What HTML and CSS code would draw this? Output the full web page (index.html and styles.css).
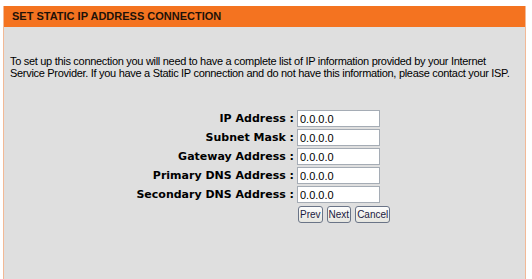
FILE: index.html
```html
<!DOCTYPE html>
<html lang="en">
<head>
    <meta charset="UTF-8">
    <title>Set Static IP Address Connection</title>
    <link rel="stylesheet" href="styles.css">
</head>
<body>
    <div class="box">
        <div class="box-heading">SET STATIC IP ADDRESS CONNECTION</div>
        <div class="box-body">
            <p class="intro">To set up this connection you will need to have a complete list of IP information provided by your Internet Service Provider. If you have a Static IP connection and do not have this information, please contact your ISP.</p>
            <table class="form-table">
                <tr>
                    <td class="label">IP Address :</td>
                    <td><input type="text" class="field" value="0.0.0.0"></td>
                </tr>
                <tr>
                    <td class="label">Subnet Mask :</td>
                    <td><input type="text" class="field" value="0.0.0.0"></td>
                </tr>
                <tr>
                    <td class="label">Gateway Address :</td>
                    <td><input type="text" class="field" value="0.0.0.0"></td>
                </tr>
                <tr>
                    <td class="label">Primary DNS Address :</td>
                    <td><input type="text" class="field" value="0.0.0.0"></td>
                </tr>
                <tr>
                    <td class="label">Secondary DNS Address :</td>
                    <td><input type="text" class="field" value="0.0.0.0"></td>
                </tr>
                <tr>
                    <td></td>
                    <td class="buttons">
                        <button class="btn">Prev</button><button class="btn">Next</button><button class="btn">Cancel</button>
                    </td>
                </tr>
            </table>
        </div>
    </div>
</body>
</html>
```

FILE: styles.css
```css
body {
    margin: 0;
    background-color: #fff;
    font-family: "Liberation Sans", Arial, sans-serif;
    font-size: 11px;
    color: #000;
}
.box {
    margin: 6px 6px 0 3px;
    border-left: 1px solid #f2b996;
    border-right: 1px solid #f2b996;
    background-color: #dfdfdf;
    height: 273px;
}
.box-heading {
    background-color: #f47320;
    color: #1e1208;
    font-weight: bold;
    font-size: 11px;
    height: 21px;
    line-height: 21px;
    padding-left: 8px;
}
.box-body {
    padding: 0 6px;
}
.intro {
    margin: 0;
    padding-top: 28px;
    line-height: 12px;
    letter-spacing: -0.3px;
}
.form-table {
    margin-top: 30px;
    border-collapse: collapse;
}
.form-table td {
    padding: 1px 0;
    height: 17px;
}
.label {
    width: 284px;
    text-align: right;
    font-family: "DejaVu Sans", Verdana, sans-serif;
    font-size: 11px;
    font-weight: bold;
    padding-right: 3px !important;
}
.field {
    box-sizing: border-box;
    width: 83px;
    height: 17px;
    border: 1px solid #a5acb5;
    background-color: #fff;
    font-family: "Liberation Sans", Arial, sans-serif;
    font-size: 11px;
    padding: 0 2px;
    margin: 0;
}
.buttons {
    padding: 2px 0 0 1px !important;
    display: flex;
    gap: 4px;
}
.btn {
    font-family: "Liberation Sans", Arial, sans-serif;
    font-size: 10px;
    height: 17px;
    padding: 0 1px;
    margin: 0;
    border: 1px solid #6a7487;
    border-radius: 3px;
    background: linear-gradient(#fdfdfd, #e6e6e0);
    color: #1a1a40;
}
```
